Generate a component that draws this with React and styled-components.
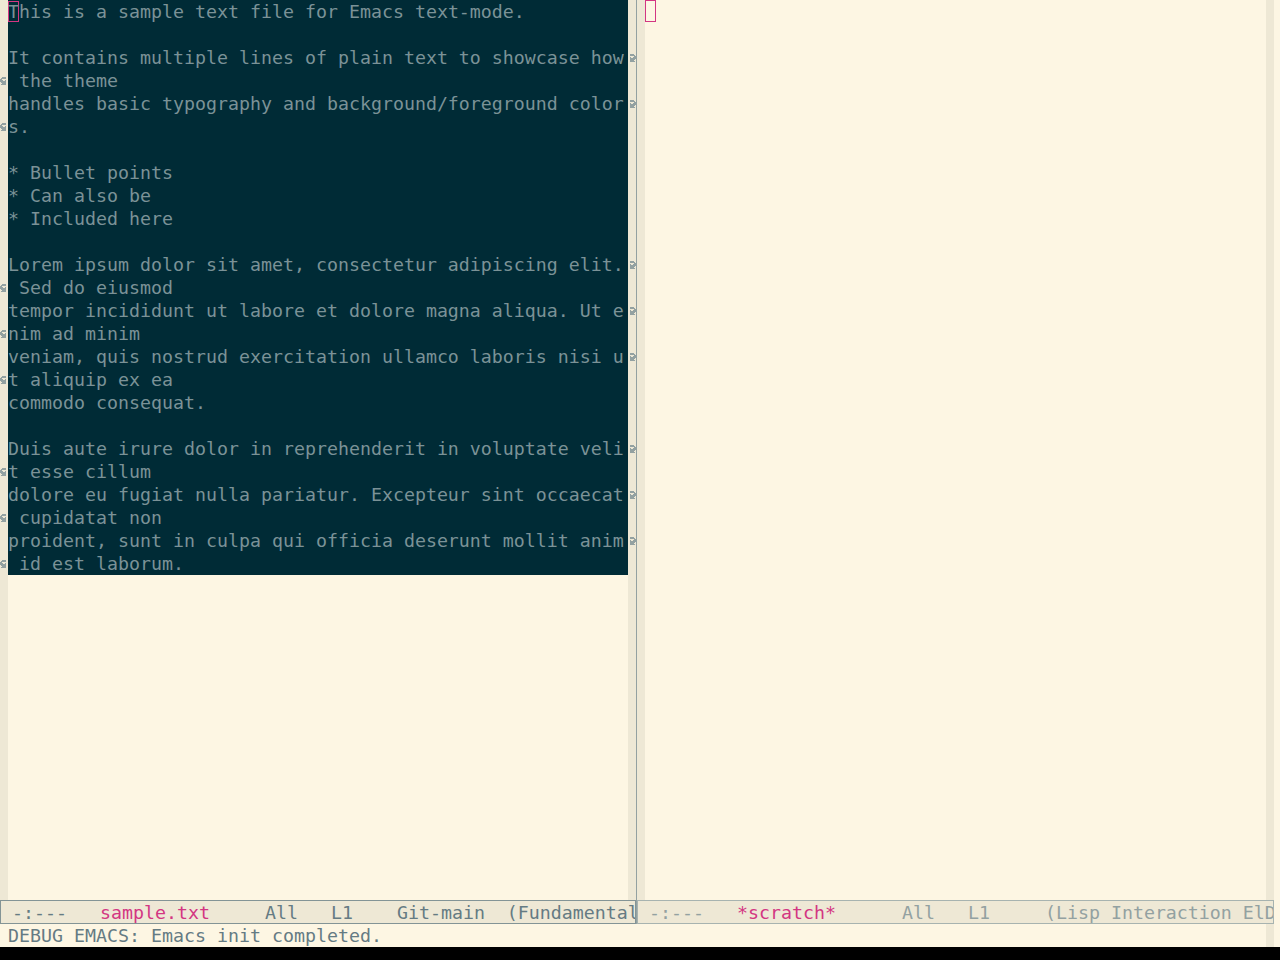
import React from "react";
import styled, { createGlobalStyle } from "styled-components";

const GlobalStyle = createGlobalStyle`
  html, body {
    margin: 0;
    padding: 0;
    background: #000;
  }
  #root {
    width: 1280px;
    height: 960px;
    background: #000;
  }
`;

const Frame = styled.div`
  width: 1280px;
  height: 947px;
  display: grid;
  grid-template-rows: 1fr 23px;
  background: #fdf6e3;
  font-family: "DejaVu Sans Mono", "Liberation Mono", monospace;
  font-size: 18.27px;
  overflow: hidden;
`;

const Windows = styled.div`
  display: grid;
  grid-template-columns: 636px 1px 637px 1fr;
  min-height: 0;
`;

const Window = styled.div`
  display: grid;
  grid-template-rows: 1fr 24px;
  min-height: 0;
  min-width: 0;
`;

const Body = styled.div`
  display: grid;
  grid-template-columns: 8px 1fr 8px;
  background: #fdf6e3;
  min-height: 0;
  overflow: hidden;
`;

const Fringe = styled.div`
  background: #eee8d5;
  display: flex;
  flex-direction: column;
`;

const FringeCell = styled.div`
  height: 23px;
  flex: 0 0 23px;
  display: flex;
  align-items: center;
  justify-content: center;
`;

const TextArea = styled.div`
  display: flex;
  flex-direction: column;
  min-width: 0;
`;

const Line = styled.div`
  height: 23px;
  line-height: 23px;
  white-space: pre;
  overflow: hidden;
  color: ${(p) => (p.$dark ? "#7b9297" : "#657b83")};
  background: ${(p) => (p.$dark ? "#002b36" : "transparent")};
`;

const Cursor = styled.span`
  box-shadow: inset 0 0 0 1px #d33682;
`;

const EmptyCursor = styled.span`
  display: inline-block;
  vertical-align: top;
  width: 11px;
  height: 22px;
  box-sizing: border-box;
  border: 1px solid #d33682;
`;

const Divider = styled.div`
  background: #93a1a1;
`;

const ModeLine = styled.div`
  border: 1px solid ${(p) => (p.$active ? "#839496" : "#a7b3b0")};
  background: #eee8d5;
  color: ${(p) => (p.$active ? "#657b83" : "#93a1a1")};
  padding-top: 1px;
  line-height: 21px;
  white-space: pre;
  overflow: hidden;
`;

const BufferName = styled.span`
  color: #d33682;
`;

const Minibuffer = styled.div`
  display: grid;
  grid-template-columns: 8px 1fr 8px 6px;
  background: #fdf6e3;
`;

const MiniText = styled.div`
  padding-top: 1px;
  line-height: 22px;
  color: #657b83;
  white-space: pre;
`;

const Spacer = styled.div`
  background: ${(p) => (p.$fringe ? "#eee8d5" : "transparent")};
`;

// emacs fringe bitmaps, 8x8
const BITMAPS = {
  left: [0x3c, 0x7c, 0xc0, 0xe4, 0xfc, 0x7c, 0x3c, 0x7c],
  right: [0x3c, 0x3e, 0x03, 0x27, 0x3f, 0x3e, 0x3c, 0x3e],
};

function FringeArrow({ dir }) {
  let d = "";
  BITMAPS[dir].forEach((row, y) => {
    for (let x = 0; x < 8; x++) {
      if (row & (0x80 >> x)) d += `M${x} ${y}h1v1h-1z`;
    }
  });
  return (
    <svg width="8" height="8" viewBox="0 0 8 8" shapeRendering="crispEdges">
      <path d={d} fill="#93a1a1" />
    </svg>
  );
}

const rows = [
  { t: "This is a sample text file for Emacs text-mode.", cursor: true },
  { t: "" },
  { t: "It contains multiple lines of plain text to showcase how", wrap: true },
  { t: " the theme", cont: true },
  { t: "handles basic typography and background/foreground color", wrap: true },
  { t: "s.", cont: true },
  { t: "" },
  { t: "* Bullet points" },
  { t: "* Can also be" },
  { t: "* Included here" },
  { t: "" },
  { t: "Lorem ipsum dolor sit amet, consectetur adipiscing elit.", wrap: true },
  { t: " Sed do eiusmod", cont: true },
  { t: "tempor incididunt ut labore et dolore magna aliqua. Ut e", wrap: true },
  { t: "nim ad minim", cont: true },
  { t: "veniam, quis nostrud exercitation ullamco laboris nisi u", wrap: true },
  { t: "t aliquip ex ea", cont: true },
  { t: "commodo consequat." },
  { t: "" },
  { t: "Duis aute irure dolor in reprehenderit in voluptate veli", wrap: true },
  { t: "t esse cillum", cont: true },
  { t: "dolore eu fugiat nulla pariatur. Excepteur sint occaecat", wrap: true },
  { t: " cupidatat non", cont: true },
  { t: "proident, sunt in culpa qui officia deserunt mollit anim", wrap: true },
  { t: " id est laborum.", cont: true },
];

function SampleWindow() {
  return (
    <Window>
      <Body>
        <Fringe>
          {rows.map((r, i) => (
            <FringeCell key={i}>{r.cont && <FringeArrow dir="left" />}</FringeCell>
          ))}
        </Fringe>
        <TextArea>
          {rows.map((r, i) => (
            <Line key={i} $dark>
              {r.cursor ? (
                <>
                  <Cursor>{r.t[0]}</Cursor>
                  {r.t.slice(1)}
                </>
              ) : (
                r.t
              )}
            </Line>
          ))}
        </TextArea>
        <Fringe>
          {rows.map((r, i) => (
            <FringeCell key={i}>{r.wrap && <FringeArrow dir="right" />}</FringeCell>
          ))}
        </Fringe>
      </Body>
      <ModeLine $active>
        {" -:---   "}
        <BufferName>sample.txt</BufferName>
        {"     All   L1    Git-main  (Fundamental)"}
      </ModeLine>
    </Window>
  );
}

function ScratchWindow() {
  return (
    <Window>
      <Body>
        <Fringe />
        <TextArea>
          <Line>
            <EmptyCursor />
          </Line>
        </TextArea>
        <Fringe />
      </Body>
      <ModeLine>
        {" -:---   "}
        <BufferName>*scratch*</BufferName>
        {"      All   L1     (Lisp Interaction ElDoc)"}
      </ModeLine>
    </Window>
  );
}

export default function App() {
  return (
    <>
      <GlobalStyle />
      <Frame>
        <Windows>
          <SampleWindow />
          <Divider />
          <ScratchWindow />
          <Spacer />
        </Windows>
        <Minibuffer>
          <Spacer />
          <MiniText>DEBUG EMACS: Emacs init completed.</MiniText>
          <Spacer $fringe />
          <Spacer />
        </Minibuffer>
      </Frame>
    </>
  );
}
